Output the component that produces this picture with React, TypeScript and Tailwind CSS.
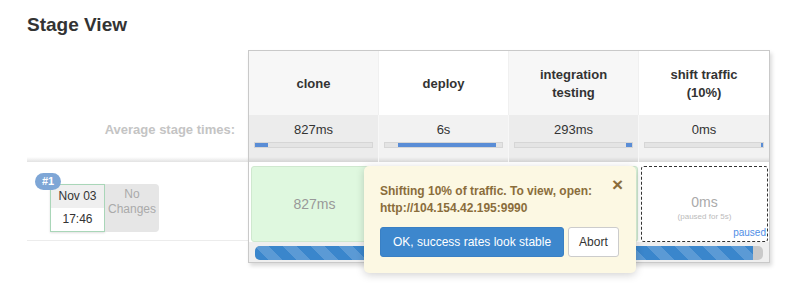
import React from "react";

type Stage = {
  name: string[];
  avg: string;
  head: string;
  row: string;
  bar: [number, number];
};

const stages: Stage[] = [
  { name: ["clone"], avg: "827ms", head: "bg-[#f7f7f7]", row: "bg-[#ececec]", bar: [0, 11] },
  { name: ["deploy"], avg: "6s", head: "bg-white", row: "bg-[#f2f2f2]", bar: [11, 84] },
  { name: ["integration", "testing"], avg: "293ms", head: "bg-[#f7f7f7]", row: "bg-[#ececec]", bar: [95, 5] },
  { name: ["shift traffic", "(10%)"], avg: "0ms", head: "bg-white", row: "bg-[#f2f2f2]", bar: [99, 1] },
];

const font = { fontFamily: '"Liberation Sans", Arial, Helvetica, sans-serif' };

function AvgBar({ bar }: { bar: [number, number] }) {
  return (
    <div className="mx-[5px] mt-[4px] flex h-[6px] border border-[#d6d6d6] bg-[#e4e4e4]">
      <div style={{ width: `${bar[0]}%` }} />
      <div className="bg-[#5a8dd6]" style={{ width: `${bar[1]}%`, minWidth: 2 }} />
    </div>
  );
}

export default function App() {
  return (
    <div className="min-h-[296px] bg-white pl-[27px] pt-[14px] text-[#333]" style={font}>
      <h2 className="text-[19px] font-bold leading-[22px] text-[#333]">Stage View</h2>

      <div className="mt-[14px] flex">
        {/* left column */}
        <div className="flex w-[221px] flex-col">
          <div className="h-[65px]" />
          <div className="flex h-[47px] flex-col">
            <div className="flex-1 pr-[13px] pt-[7px] text-right text-[13px] font-bold leading-[16px] text-[#c4c4c4]">
              Average stage times:
            </div>
            <div className="h-[5px] bg-gradient-to-b from-white to-[#e2e2e2]" />
          </div>
          <div className="h-[79px] border-b border-[#ececec] pl-[23px] pt-[22px]">
            <div className="relative flex">
              <span className="absolute left-[-15px] top-[-11px] rounded-full bg-[#7ea6d6] px-[7px] text-[11px] font-bold leading-[17px] text-white">
                #1
              </span>
              <div className="w-[55px] border border-[#a9d6b8] text-center text-[12px] leading-[23px] text-[#333] shadow-[0_1px_2px_rgba(0,0,0,0.12)]">
                <div className="bg-[#efefef]">Nov 03</div>
                <div className="bg-white">17:46</div>
              </div>
              <div className="flex w-[54px] flex-col items-center rounded-r-[4px] bg-[#e6e6e6] pt-[3px] text-[12px] leading-[15px] text-[#aaa]">
                <span>No</span>
                <span>Changes</span>
              </div>
            </div>
          </div>
        </div>

        {/* stage table */}
        <div className="relative h-[213px] border border-[#c9c9c9] shadow-[2px_3px_4px_rgba(0,0,0,0.14)]">
          <div className="flex h-[64px]">
            {stages.map((s, i) => (
              <div
                key={i}
                className={`flex w-[130px] flex-col items-center justify-center pt-[2px] text-center text-[13px] font-bold leading-[18px] text-[#333] ${s.head} ${i < 3 ? "border-r border-[#f0f0f0]" : ""}`}
              >
                {s.name.map((n) => (
                  <span key={n}>{n}</span>
                ))}
              </div>
            ))}
          </div>
          <div className="flex h-[47px]">
            {stages.map((s, i) => (
              <div key={i} className={`flex w-[130px] flex-col ${s.row} ${i < 3 ? "border-r border-[#f7f7f7]" : ""}`}>
                <div className="flex-1">
                  <div className="pt-[7px] text-center text-[13px] leading-[16px] text-[#333]">{s.avg}</div>
                  <AvgBar bar={s.bar} />
                </div>
                <div className="h-[5px] bg-gradient-to-b from-transparent to-black/10" />
              </div>
            ))}
          </div>
          <div className="flex h-[80px] bg-white">
            {[0, 1, 2].map((i) => (
              <div key={i} className="w-[130px] pl-[2px] pr-[1px] pt-[4px]">
                <div className="flex h-[76px] items-center justify-center rounded-[3px] border border-[#cfe8cf] bg-[#dff8df] text-[14px] text-[#999]">
                  {i === 0 ? "827ms" : ""}
                </div>
              </div>
            ))}
            <div className="w-[130px] pl-[2px] pr-[1px] pt-[4px]">
              <div className="relative flex h-[76px] flex-col items-center rounded-[3px] border border-dashed border-[#333] bg-white pt-[26px]">
                <span className="text-[14px] leading-[18px] text-[#aaa]">0ms</span>
                <span className="text-[8px] leading-[12px] text-[#bbb]">(paused for 5s)</span>
                <span className="absolute bottom-[2px] right-[1px] text-[10px] leading-[12px] text-[#4f8ee6]">paused</span>
              </div>
            </div>
          </div>
          <div className="h-[20px] bg-[#efefef] px-[6px] pt-[4px]">
            <div className="h-[14px] overflow-hidden rounded-[5px] bg-[#c9c9c9]">
              <div className="h-full w-[98%] bg-[#3a86cc] bg-[linear-gradient(45deg,rgba(255,255,255,.17)_25%,transparent_25%,transparent_50%,rgba(255,255,255,.17)_50%,rgba(255,255,255,.17)_75%,transparent_75%,transparent)] bg-[length:28px_28px]" />
            </div>
          </div>

          {/* input popup */}
          <div className="absolute left-[115px] top-[115px] w-[272px] rounded-[5px] bg-[#fcf8e3] px-4 pb-4 pt-[17px] shadow-[0_2px_8px_rgba(0,0,0,0.18)]">
            <span className="absolute right-[13px] top-[10px] text-[19px] font-bold leading-[18px] text-[#8a6d3b]">×</span>
            <p className="text-[12px] font-bold leading-[17px] text-[#8a6d3b]">
              Shifting 10% of traffic. To view, open: http://104.154.42.195:9990
            </p>
            <div className="mt-[10px] flex gap-[4px]">
              <button className="h-[30px] rounded-[3px] border border-[#3a80c4] bg-[#3d87cd] px-[12px] text-[12px] text-white">
                OK, success rates look stable
              </button>
              <button className="h-[30px] rounded-[3px] border border-[#ccc] bg-white px-[10px] text-[12px] text-[#333]">
                Abort
              </button>
            </div>
          </div>
        </div>
      </div>
    </div>
  );
}
